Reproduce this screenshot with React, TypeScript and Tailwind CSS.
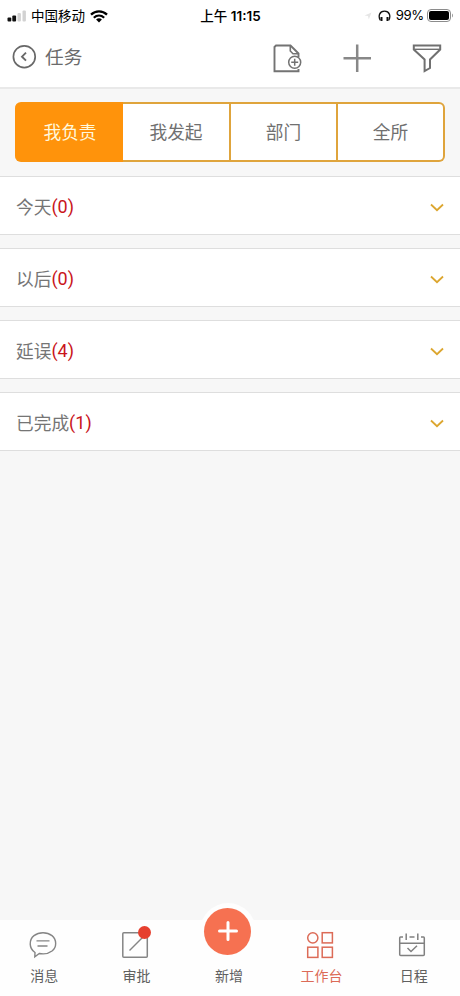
import { ReactNode } from 'react';

const tabs = ['我负责', '我发起', '部门', '全所'];

const groups = [
  { title: '今天', count: 0 },
  { title: '以后', count: 0 },
  { title: '延误', count: 4 },
  { title: '已完成', count: 1 },
];

const StatusBar = () => (
  <div className="grid h-8 grid-cols-3 items-center pl-[7px] pr-[6px] text-[13.5px] text-black">
    <div className="flex items-center">
      <svg width="20" height="12" viewBox="0 0 20 12">
        <rect x="0.5" y="7.5" width="3.8" height="4" rx="1" fill="#111" />
        <rect x="5.3" y="5.5" width="3.8" height="6" rx="1" fill="#111" />
        <rect x="10.5" y="3" width="3.4" height="8.5" rx="1" fill="#d2d2d2" />
        <rect x="15.5" y="0.5" width="3.4" height="11" rx="1" fill="#d2d2d2" />
      </svg>
      <span className="ml-[4px] whitespace-nowrap">中国移动</span>
      <svg className="ml-[5px]" width="18" height="13" viewBox="0 0 18 13" fill="none" stroke="#000">
        <path d="M1 4.6C5.5 0.3 12.5 0.3 17 4.6" strokeWidth="2.3" />
        <path d="M3.8 7.7C6.9 4.9 11.1 4.9 14.2 7.7" strokeWidth="2.2" />
        <path d="M6.1 9.5C7.8 7.9 10.2 7.9 11.9 9.5L9 12.4Z" fill="#000" stroke="none" />
      </svg>
    </div>
    <div className="whitespace-nowrap text-center font-['Inter','Noto_Sans_CJK_SC',sans-serif] text-[13.5px] font-semibold">
      <span className="font-medium">上午</span> 11:15
    </div>
    <div className="flex items-center justify-end font-['Inter','Noto_Sans_CJK_SC',sans-serif]">
      <svg width="8" height="8" viewBox="0 0 8 8">
        <path d="M0.5 3.5L7.5 0.5L4.8 7.5L4 4Z" fill="#e6e6e6" />
      </svg>
      <svg className="ml-[6px]" width="13" height="12" viewBox="0 0 13 12" fill="none" stroke="#111" strokeWidth="1.3">
        <path d="M2.2 10.2C0 6 1.5 1.2 6.5 1.2S13 6 10.8 10.2" />
        <path d="M3.5 7V11M9.5 7V11" strokeWidth="2" />
      </svg>
      <span className="ml-[5px] text-[13.2px] tracking-tight">99%</span>
      <svg className="ml-[3px]" width="27" height="13" viewBox="0 0 27 13">
        <rect x="0.5" y="0.5" width="23" height="12" rx="3.5" fill="none" stroke="#8c8c8c" />
        <rect x="2" y="2" width="20" height="9" rx="2" fill="#000" />
        <path d="M25 4.5C26.3 5 26.3 8 25 8.5Z" fill="#999" />
      </svg>
    </div>
  </div>
);

const Header = () => (
  <header className="flex h-[57px] items-start border-b-2 border-[#e9e9e9] pl-3 pr-[18px] text-[#6b6b6b]">
    <svg className="mt-3" width="25" height="25" viewBox="0 0 25 25" fill="none" stroke="#686868">
      <circle cx="12.3" cy="12.7" r="10.9" strokeWidth="1.7" />
      <path d="M14 8.7L10 12.7L14 16.7" strokeWidth="1.9" />
    </svg>
    <h1 className="ml-2 mt-[11.5px] text-[18.7px] leading-7">任务</h1>
    <div className="ml-auto flex">
      <svg className="mt-[11px]" width="31" height="31" viewBox="0 0 31 31" fill="none" stroke="#737373" strokeWidth="1.9">
        <path d="M26.5 14V10.5L18.5 2.5H4L2.5 4V28.2H26.5V26" />
        <path d="M18.3 3V8L21 10.7H26" strokeWidth="1.6" />
        <circle cx="22.7" cy="19.2" r="6" strokeWidth="1.5" fill="#fff" />
        <path d="M19.2 19.2H26.2M22.7 15.7V22.7" strokeWidth="1.5" />
      </svg>
      <svg className="ml-[39px] mt-[11px]" width="30" height="30" viewBox="0 0 30 30" stroke="#888" strokeWidth="2.5">
        <path d="M1.5 15.2H29M15.2 1.5V29" />
      </svg>
      <svg className="ml-[40px] mt-[11px]" width="30" height="30" viewBox="0 0 30 30" fill="none" stroke="#707070" strokeWidth="2">
        <path d="M1.8 2.5H28.2V6.5L18 16.5V25L12.6 28V16.5L1.8 6.5Z" />
        <path d="M2 6.3H28" strokeWidth="1.4" />
      </svg>
    </div>
  </header>
);

const NavItem = ({ label, active, children }: { label: string; active?: boolean; children: ReactNode }) => (
  <div className={`flex flex-1 flex-col items-center pt-2.5 text-[14px] ${active ? 'text-[#dc6b57]' : 'text-[#606060]'}`}>
    <div className="relative mr-[3px] h-[30px] w-[30px]">{children}</div>
    <span className="mt-[6px] leading-5">{label}</span>
  </div>
);

export default function App() {
  return (
    <div className="flex h-[996px] w-[460px] flex-col overflow-hidden bg-[#f7f7f7] font-['Roboto','Noto_Sans_CJK_SC',sans-serif]">
      <div className="bg-white">
        <StatusBar />
        <Header />
      </div>

      {/* Tabs */}
      <div className="mx-[15px] mb-[14px] mt-[13px] grid h-[60px] grid-cols-[108px_108px_107px_107px]">
        {tabs.map((tab, index) => (
          <div
            key={tab}
            className={`flex items-center justify-center border-y-2 pt-[3px] text-[17.7px] ${
              index === 0
                ? 'rounded-l-md border-[#fb940f] bg-[#ff930b] pl-0.5 text-[#fff8dc]'
                : 'border-r-2 border-[#dfa43c] bg-white text-[#707070]'
            } ${index === tabs.length - 1 ? 'rounded-r-md' : ''}`}
          >
            {tab}
          </div>
        ))}
      </div>

      {/* Task groups */}
      <div className="flex flex-col gap-[13px]">
        {groups.map((group) => (
          <div key={group.title} className="flex h-[59px] items-center border-y border-[#dedede] bg-white px-4 pt-1 text-[17.7px] text-[#757575]">
            <span className="pt-px">{group.title}</span>
            <span className="pb-[3px] text-[18px] text-[#c9151b]">({group.count})</span>
            <svg className="ml-auto" width="14" height="9" viewBox="0 0 14 9" fill="none" stroke="#dca62f" strokeWidth="1.8">
              <path d="M1 1.5L7 7.2L13 1.5" />
            </svg>
          </div>
        ))}
      </div>

      {/* Bottom navigation */}
      <nav className="-ml-0.5 mt-auto flex h-[76px] bg-[#fefefe]">
        <NavItem label="消息">
          <svg width="30" height="30" viewBox="0 0 30 30" fill="none" stroke="#858585" strokeWidth="1.4">
            <path d="M7 22.5C0.8 18.5 0.8 9.8 6 5.6C11 1.8 19 1.8 24 5.6C28.9 9.8 28.9 17 24 21C20.5 23.7 15.5 24.3 11.3 23.5L6.8 26.8Z" />
            <path d="M8.5 10.9H21.5M9.5 16H19.5" />
          </svg>
        </NavItem>
        <NavItem label="审批">
          <svg width="30" height="30" viewBox="0 0 30 30" fill="none" stroke="#858585" strokeWidth="1.5">
            <rect x="2.8" y="2.8" width="24.5" height="24.5" rx="1" />
            <path d="M9.5 20.5L23.5 6.5" />
          </svg>
          <span className="absolute -top-1 left-[18px] h-[13px] w-[13px] rounded-full bg-[#e6402f]" />
        </NavItem>
        <NavItem label="新增">
          <span className="absolute -left-[13px] -top-[27px] flex h-[56px] w-[56px] items-center justify-center rounded-full bg-[#fefefe]">
            <span className="flex h-[47px] w-[47px] items-center justify-center rounded-full bg-[#f67151]">
              <svg width="22" height="22" viewBox="0 0 22 22" stroke="#fff" strokeWidth="3" strokeLinecap="round">
                <path d="M2.5 11H19.5M11 2.5V19.5" />
              </svg>
            </span>
          </span>
        </NavItem>
        <NavItem label="工作台" active>
          <svg width="30" height="30" viewBox="0 0 30 30" fill="none" stroke="#dc6b57" strokeWidth="1.5">
            <circle cx="7.8" cy="7.8" r="5.1" />
            <rect x="17.2" y="2.7" width="10.2" height="10.2" />
            <rect x="2.7" y="17.2" width="10.2" height="10.2" />
            <rect x="17.2" y="17.2" width="10.2" height="10.2" />
          </svg>
        </NavItem>
        <NavItem label="日程">
          <svg width="30" height="30" viewBox="0 0 30 30" fill="none" stroke="#808080" strokeWidth="1.5">
            <path d="M6 7H3.5Q2.7 7 2.7 8V24.5Q2.7 25.5 3.7 25.5H26.3Q27.3 25.5 27.3 24.5V8Q27.3 7 26.5 7H24M12.5 7H17.5M3 13.2H27M9.2 3.5V10M20.8 3.5V10" />
            <path d="M10.5 18L14 21.5L20 15.8" />
          </svg>
        </NavItem>
      </nav>
    </div>
  );
}
